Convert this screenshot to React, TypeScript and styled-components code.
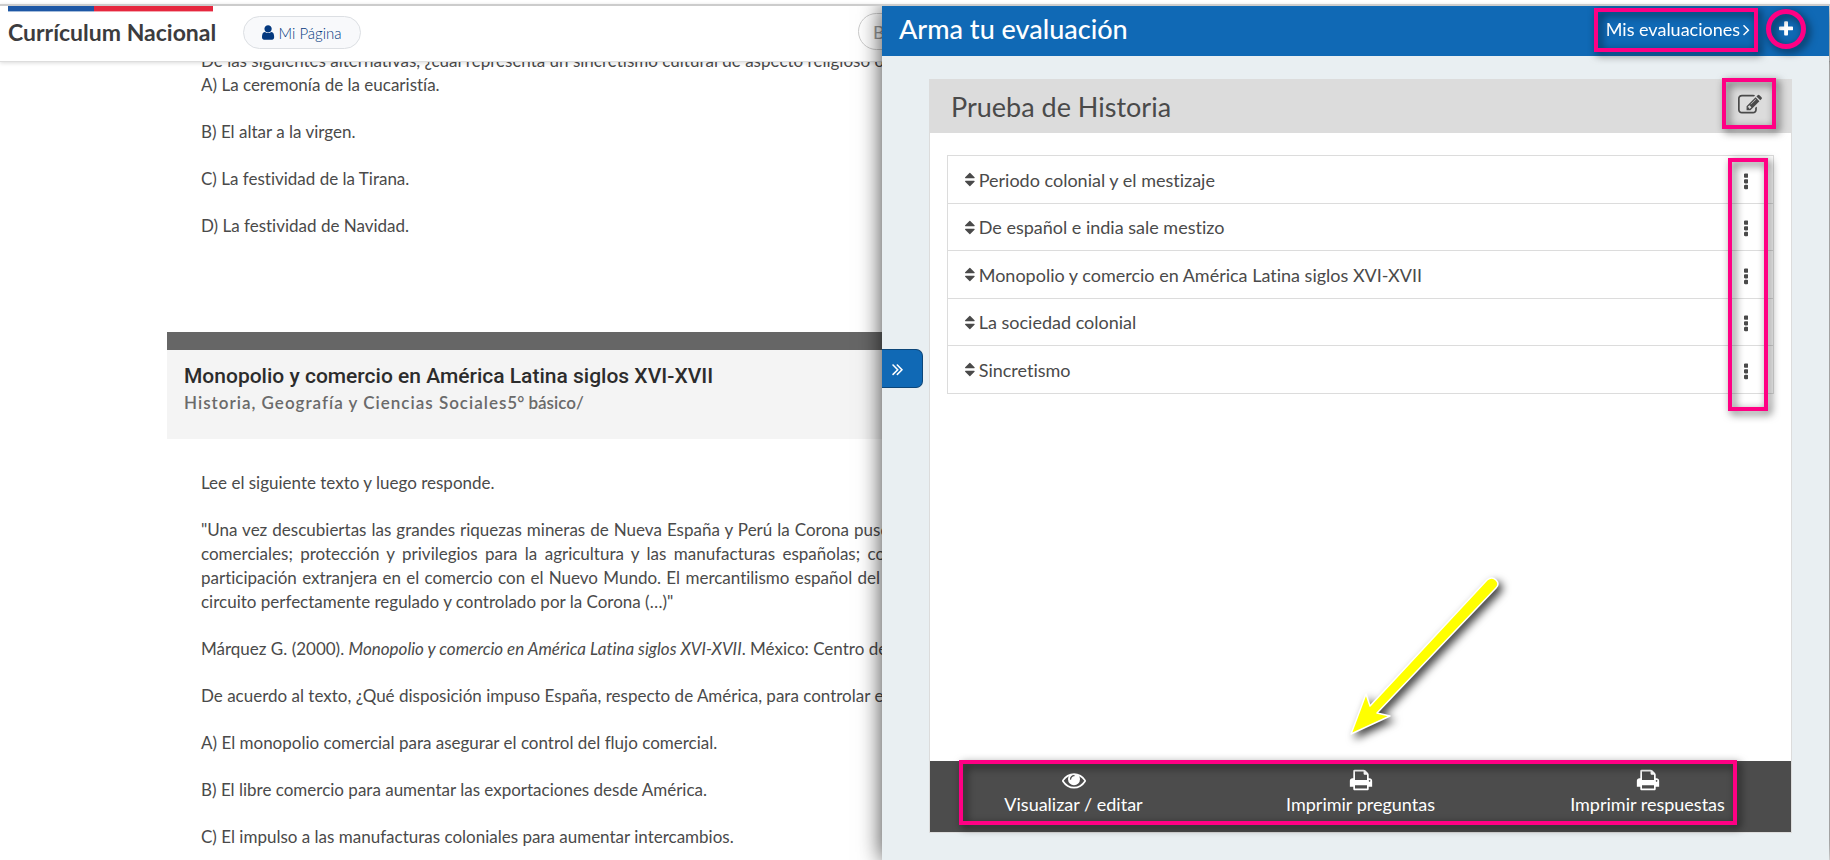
import React from 'react';
import styled, { createGlobalStyle, css } from 'styled-components';

const GlobalStyle = createGlobalStyle`
  *, *::before, *::after { box-sizing: border-box; }
  body { margin: 0; background: #fff; overflow: hidden; font-variant-ligatures: none; }
  h1, h2, h3, p, ul { margin: 0; padding: 0; }
  button { border: 0; padding: 0; background: none; color: inherit; font: inherit; cursor: pointer; }
  a { color: inherit; text-decoration: none; }
`;

/* ---------- icons ---------- */

const glyphs = {
  user: {
    box: '256 0 1280 1792',
    d: 'M1536 1399q0 109-62.5 187t-150.5 78h-854q-88 0-150.5-78t-62.5-187q0-85 8.5-160.5t31.5-152 58.5-131 94-89 134.5-34.5q131 128 313 128t313-128q76 0 134.5 34.5t94 89 58.5 131 31.5 152 8.5 160.5zm-256-887q0 159-112.5 271.5t-271.5 112.5-271.5-112.5-112.5-271.5 112.5-271.5 271.5-112.5 271.5 112.5 112.5 271.5z',
  },
  angle: {
    box: '576 0 640 1792',
    d: 'M1171 960q0 13-10 23l-466 466q-10 10-23 10t-23-10l-50-50q-10-10-10-23t10-23l393-393-393-393q-10-10-10-23t10-23l50-50q10-10 23-10t23 10l466 466q10 10 10 23z',
  },
  doubleAngle: {
    box: '384 0 1024 1792',
    d: 'M979 960q0 13-10 23l-466 466q-10 10-23 10t-23-10l-50-50q-10-10-10-23t10-23l393-393-393-393q-10-10-10-23t10-23l50-50q10-10 23-10t23 10l466 466q10 10 10 23zm384 0q0 13-10 23l-466 466q-10 10-23 10t-23-10l-50-50q-10-10-10-23t10-23l393-393-393-393q-10-10-10-23t10-23l50-50q10-10 23-10t23 10l466 466q10 10 10 23z',
  },
  plus: {
    box: '192 0 1408 1792',
    d: 'M1600 736v192q0 40-28 68t-68 28h-416v416q0 40-28 68t-68 28h-192q-40 0-68-28t-28-68v-416h-416q-40 0-68-28t-28-68v-192q0-40 28-68t68-28h416v-416q0-40 28-68t68-28h192q40 0 68 28t28 68v416h416q40 0 68 28t28 68z',
  },
  edit: {
    box: '0 0 1792 1792',
    d: 'M888 1184l116-116-152-152-116 116v56h96v96h56zm440-720q-16-16-33 1l-350 350q-17 17-1 33t33-1l350-350q17-17 1-33zm80 594v190q0 119-84.5 203.5t-203.5 84.5h-832q-119 0-203.5-84.5t-84.5-203.5v-832q0-119 84.5-203.5t203.5-84.5h832q63 0 117 25 15 7 18 23 3 17-9 29l-49 49q-14 14-32 8-23-6-45-6h-832q-66 0-113 47t-47 113v832q0 66 47 113t113 47h832q66 0 113-47t47-113v-126q0-13 9-22l64-64q15-15 35-7t20 29zm-96-738l288 288-672 672h-288v-288zm444 132l-92 92-288-288 92-92q28-28 68-28t68 28l152 152q28 28 28 68t-28 68z',
  },
  sort: {
    box: '384 0 1024 1792',
    d: 'M1408 1088q0 26-19 45l-448 448q-19 19-45 19t-45-19l-448-448q-19-19-19-45t19-45 45-19h896q26 0 45 19t19 45zm0-384q0 26-19 45t-45 19h-896q-26 0-45-19t-19-45 19-45l448-448q19-19 45-19t45 19l448 448q19 19 19 45z',
  },
  dots: {
    box: '704 0 384 1792',
    d: 'M1088 1248v192q0 40-28 68t-68 28h-192q-40 0-68-28t-28-68v-192q0-40 28-68t68-28h192q40 0 68 28t28 68zm0-512v192q0 40-28 68t-68 28h-192q-40 0-68-28t-28-68v-192q0-40 28-68t68-28h192q40 0 68 28t28 68zm0-512v192q0 40-28 68t-68 28h-192q-40 0-68-28t-28-68v-192q0-40 28-68t68-28h192q40 0 68 28t28 68z',
  },
  eye: {
    box: '0 0 1792 1792',
    d: 'M1664 960q-152-236-381-353 61 104 61 225 0 185-131.5 316.5t-316.5 131.5-316.5-131.5-131.5-316.5q0-121 61-225-229 117-381 353 133 205 333.5 326.5t434.5 121.5 434.5-121.5 333.5-326.5zm-720-384q0-20-14-34t-34-14q-125 0-214.5 89.5t-89.5 214.5q0 20 14 34t34 14 34-14 14-34q0-86 61-147t147-61q20 0 34-14t14-34zm848 384q0 34-20 69-140 230-376.5 368.5t-499.5 138.5-499.5-139-376.5-368q-20-35-20-69t20-69q140-229 376.5-368t499.5-139 499.5 139 376.5 368q20 35 20 69z',
  },
  print: {
    box: '0 0 1792 1792',
    d: 'M448 1536h896v-256h-896v256zm0-640h896v-384h-160q-40 0-68-28t-28-68v-160h-640v640zm1152 64q0-26-19-45t-45-19-45 19-19 45 19 45 45 19 45-19 19-45zm128 0v416q0 13-9.5 22.5t-22.5 9.5h-224v160q0 40-28 68t-68 28h-960q-40 0-68-28t-28-68v-160h-224q-13 0-22.5-9.5t-9.5-22.5v-416q0-79 56.5-135.5t135.5-56.5h64v-544q0-40 28-68t68-28h672q40 0 88 20t76 48l152 152q28 28 48 76t20 88v256h64q79 0 135.5 56.5t56.5 135.5z',
  },
};

const Svg = styled.svg<{ $size: number }>`
  display: block;
  flex: none;
  height: ${p => p.$size}px;
  fill: currentColor;
`;

const Icon = ({ name, size }: { name: keyof typeof glyphs; size: number }) => (
  <Svg $size={size} viewBox={glyphs[name].box} aria-hidden="true">
    <path d={glyphs[name].d} />
  </Svg>
);

/* ---------- page behind the panel ---------- */

const Page = styled.div`
  height: 100vh;
  overflow: hidden;
  display: flex;
  flex-direction: column;
  padding-top: 4px;
  font-family: Lato, "Liberation Sans", sans-serif;
  color: #4a4a4a;
`;

const SiteHeader = styled.header`
  flex: none;
  position: relative;
  z-index: 1;
  height: 58px;
  display: flex;
  align-items: flex-start;
  padding-left: 8px;
  background: #fff;
  border-top: 2px solid #ccc;
  border-bottom: 1px solid #ddd;
  box-shadow: 0 1px 4px rgba(0, 0, 0, 0.15);
`;

const Brand = styled.a`
  width: 205px;
  font-size: 23px;
  font-weight: 700;
  line-height: 26px;
  color: #3c3c3e;
  white-space: nowrap;
`;

const Flag = styled.span`
  display: block;
  height: 6px;
  margin-bottom: 7px;
  background: linear-gradient(90deg, #1d57a5 42%, #e6273e 42%);
  border-bottom: 1px solid rgba(255, 255, 255, 0.6);
`;

const MyPage = styled.button`
  display: flex;
  align-items: center;
  justify-content: center;
  gap: 4px;
  width: 118px;
  height: 33px;
  margin: 10px 0 0 30px;
  border: 1px solid #dcdfe3;
  border-radius: 17px;
  background: #f8f9fb;
  color: #04397f;
  font-size: 15px;
  font-weight: 300;
`;

const Search = styled.input`
  width: 420px;
  height: 37px;
  margin: 7px 0 0 497px;
  padding: 0 14px;
  border: 1px solid #ccc;
  border-radius: 19px;
  font: 18px Lato, "Liberation Sans", sans-serif;
  &::placeholder { color: #999; opacity: 1; }
`;

const Article = styled.main`
  flex: 1;
  min-height: 0;
  margin: 0 166px 0 167px;
  font-size: 17px;
  line-height: 24px;
`;

const Statement = styled.div<{ $first?: boolean }>`
  display: flex;
  flex-direction: column;
  gap: 23px;
  padding: ${p => (p.$first ? '0 34px 94px' : '32px 34px 0')};
  ${p => p.$first && css`margin-top: -13px;`}
`;

const Line = styled.span<{ $last?: boolean }>`
  display: block;
  white-space: nowrap;
  text-align-last: ${p => (p.$last ? 'left' : 'justify')};
`;

const QuestionHead = styled.header`
  height: 107px;
  border-top: 18px solid #666;
  background: #f4f4f4;
  padding: 13px 17px;
`;

const QuestionTitle = styled.h2`
  font: 500 21px/26px Roboto, "Liberation Sans", sans-serif;
  color: #2c2c2c;
`;

const QuestionMeta = styled.p`
  font-size: 17px;
  font-weight: 600;
  line-height: 28px;
  color: #6a6a6a;
`;

const Subject = styled.span`
  letter-spacing: 1px;
`;

/* ---------- evaluation panel ---------- */

const Panel = styled.aside`
  position: fixed;
  z-index: 2;
  top: 6px;
  right: 1px;
  bottom: 0;
  width: calc(50% + 32px);
  display: flex;
  flex-direction: column;
  background: #e9eff2;
  box-shadow: 0 0 22px rgba(0, 0, 0, 0.75);
  clip-path: inset(0 -1px 0 -40px);
  font-family: Lato, "Liberation Sans", sans-serif;
  color: #4a4a4a;
`;

const PanelBar = styled.header`
  flex: none;
  height: 50px;
  display: flex;
  align-items: center;
  padding: 0 36px 4px 17px;
  background: #1069b5;
  color: #fff;
`;

const PanelTitle = styled.h1`
  flex: 1;
  font-size: 27px;
  font-weight: 500;
  line-height: 32px;
`;

const mark = css`
  content: '';
  position: absolute;
  z-index: 1;
  border: 4px solid #ff0084;
  filter: drop-shadow(3px 3px 4px rgba(0, 0, 0, 0.65));
  pointer-events: none;
`;

const MyTests = styled.a`
  position: relative;
  display: flex;
  align-items: center;
  gap: 3px;
  font-size: 18px;
  line-height: 24px;
  margin-right: 29px;
  &::after { ${mark} inset: -9px -8px -11px -12px; }
`;

const AddButton = styled.button`
  position: relative;
  &::after { ${mark} inset: -11px -13px; border-width: 5px; border-radius: 50%; }
`;

const Toggle = styled.button`
  position: absolute;
  left: 0;
  top: 343px;
  width: 41px;
  height: 39px;
  display: flex;
  align-items: center;
  padding-left: 10px;
  border: 1px solid #0c4679;
  border-left: 0;
  border-radius: 0 7px 7px 0;
  background: #1069b5;
  color: #fff;
`;

const Card = styled.section`
  flex: 1;
  display: flex;
  flex-direction: column;
  margin: 23px 37px 27px 47px;
  border: 1px solid #dcdcdc;
  background: #fff;
`;

const CardHead = styled.header`
  height: 53px;
  display: flex;
  align-items: center;
  justify-content: space-between;
  padding: 0 29px 0 21px;
  background: #dcdcdc;
`;

const CardTitle = styled.h2`
  font-size: 27px;
  font-weight: 400;
  line-height: 32px;
`;

const EditButton = styled.button`
  position: relative;
  margin-bottom: 4px;
  &::after { ${mark} inset: -15px -14px -12px -16px; }
`;

const CardBody = styled.div`
  flex: 1;
  position: relative;
  padding: 22px 17px;
`;

const List = styled.ul`
  position: relative;
  list-style: none;
  border: 1px solid #dcdcdc;
  &::after { ${mark} top: 2px; right: 5px; bottom: -18px; width: 40px; }
`;

const Item = styled.li`
  height: 48px;
  display: flex;
  align-items: center;
  gap: 4px;
  padding: 0 25px 0 17px;
  font-size: 18px;
  & + & { border-top: 1px solid #dcdcdc; }
  &:first-child, &:nth-child(even) { height: 47px; }
`;

const ItemName = styled.span`
  flex: 1;
`;

const ItemMenu = styled.button`
  padding-top: 4px;
`;

const Arrow = styled.svg`
  position: absolute;
  right: 284px;
  bottom: 16px;
  overflow: visible;
  filter: drop-shadow(4px 4px 4px rgba(0, 0, 0, 0.75));
`;

const Actions = styled.footer`
  position: relative;
  height: 71px;
  display: grid;
  grid-template-columns: repeat(3, 1fr);
  background: #4c4c4c;
  color: #fff;
  &::after { ${mark} inset: -1px 54px 7px 29px; }
`;

const Action = styled.button`
  display: flex;
  flex-direction: column;
  align-items: center;
  padding-top: 7px;
  font-size: 18px;
  line-height: 24px;
`;

const questions = [
  'Periodo colonial y el mestizaje',
  'De español e india sale mestizo',
  'Monopolio y comercio en América Latina siglos XVI-XVII',
  'La sociedad colonial',
  'Sincretismo',
];

export default function App() {
  return (
    <Page>
      <GlobalStyle />
      <SiteHeader>
        <Brand href="#">
          <Flag />
          Currículum Nacional
        </Brand>
        <MyPage type="button">
          <Icon name="user" size={17} />
          Mi Página
        </MyPage>
        <Search type="search" placeholder="Buscar" aria-label="Buscar" />
      </SiteHeader>

      <Article>
        <Statement $first>
          <p>
            De las siguientes alternativas, ¿cuál representa un sincretismo cultural de aspecto religioso ocurrido en América?
            <br />
            A) La ceremonía de la eucaristía.
          </p>
          <p>B) El altar a la virgen.</p>
          <p>C) La festividad de la Tirana.</p>
          <p>D) La festividad de Navidad.</p>
        </Statement>

        <QuestionHead>
          <QuestionTitle>Monopolio y comercio en América Latina siglos XVI-XVII</QuestionTitle>
          <QuestionMeta>
            <Subject>Historia, Geografía y Ciencias Sociales</Subject>5° básico/
          </QuestionMeta>
        </QuestionHead>
        <Statement>
          <p>Lee el siguiente texto y luego responde.</p>
          <p>
            <Line>"Una vez descubiertas las grandes riquezas mineras de Nueva España y Perú la Corona puso en práctica una política económica basada en el monopolio, que combinaba diversas disposiciones</Line>
            <Line>comerciales; protección y privilegios para la agricultura y las manufacturas españolas; control estricto de los puertos y de las flotas que cruzaban el océano, además de impedir toda la</Line>
            <Line>participación extranjera en el comercio con el Nuevo Mundo. El mercantilismo español del siglo XVI buscaba la acumulación de metales preciosos y para ello España organizó con América un</Line>
            <Line $last>circuito perfectamente regulado y controlado por la Corona (…)"</Line>
          </p>
          <p>
            Márquez G. (2000). <em>Monopolio y comercio en América Latina siglos XVI-XVII</em>. México: Centro de Estudios Históricos.
          </p>
          <p>De acuerdo al texto, ¿Qué disposición impuso España, respecto de América, para controlar el comercio?</p>
          <p>A) El monopolio comercial para asegurar el control del flujo comercial.</p>
          <p>B) El libre comercio para aumentar las exportaciones desde América.</p>
          <p>C) El impulso a las manufacturas coloniales para aumentar intercambios.</p>
        </Statement>
      </Article>

      <Panel>
        <PanelBar>
          <PanelTitle>Arma tu evaluación</PanelTitle>
          <MyTests href="#">
            Mis evaluaciones
            <Icon name="angle" size={19} />
          </MyTests>
          <AddButton type="button" aria-label="Nueva evaluación">
            <Icon name="plus" size={18} />
          </AddButton>
        </PanelBar>
        <Card>
          <CardHead>
            <CardTitle>Prueba de Historia</CardTitle>
            <EditButton type="button" aria-label="Editar nombre">
              <Icon name="edit" size={24} />
            </EditButton>
          </CardHead>
          <CardBody>
            <List>
              {questions.map(q => (
                <Item key={q}>
                  <Icon name="sort" size={17} />
                  <ItemName>{q}</ItemName>
                  <ItemMenu type="button" aria-label={`Opciones de ${q}`}>
                    <Icon name="dots" size={20} />
                  </ItemMenu>
                </Item>
              ))}
            </List>
            <Arrow width="156" height="166" viewBox="0 0 156 166" aria-hidden="true">
              <path
                d="M0 155L15 115L19 127L136 1Q141 -3 145 1Q149 5 145 9L26 134L39 137Z"
                fill="#ffff00"
                stroke="#fff"
                strokeWidth="1.5"
                strokeLinejoin="round"
              />
            </Arrow>
          </CardBody>
          <Actions>
            <Action type="button">
              <Icon name="eye" size={24} />
              Visualizar / editar
            </Action>
            <Action type="button">
              <Icon name="print" size={24} />
              Imprimir preguntas
            </Action>
            <Action type="button">
              <Icon name="print" size={24} />
              Imprimir respuestas
            </Action>
          </Actions>
        </Card>
        <Toggle type="button" aria-label="Ocultar panel">
          <Icon name="doubleAngle" size={20} />
        </Toggle>
      </Panel>
    </Page>
  );
}
